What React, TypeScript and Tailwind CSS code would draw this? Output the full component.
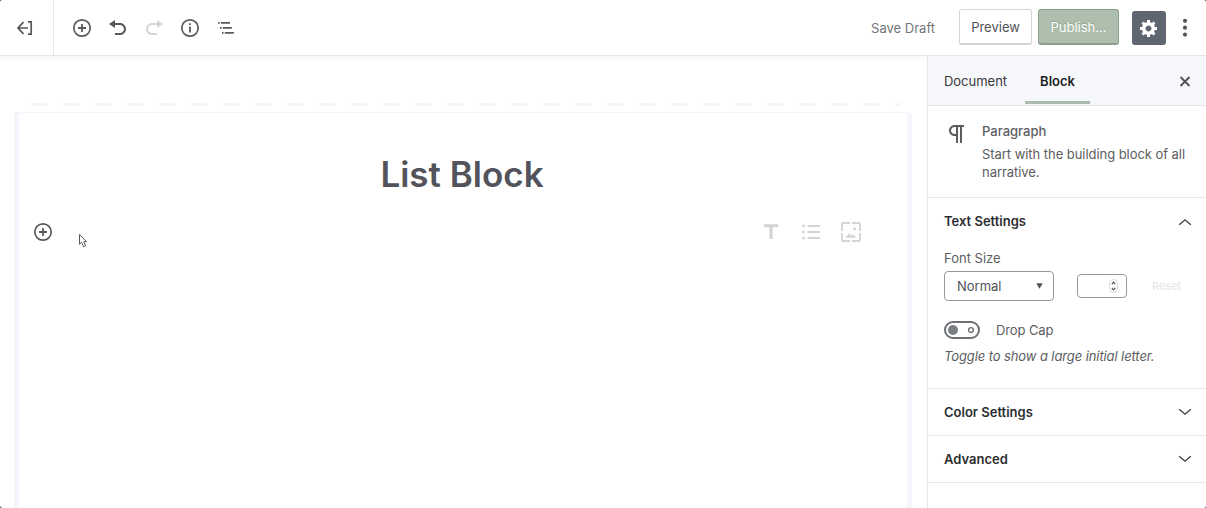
import type { ReactNode } from "react";

function Icon({ children, className = "" }: { children: ReactNode; className?: string }) {
  return (
    <svg viewBox="0 0 20 20" className={`size-5 shrink-0 fill-current ${className}`}>
      {children}
    </svg>
  );
}

function InsertIcon() {
  return (
    <Icon className="text-[#58595d]">
      <circle cx="10" cy="10" r="8.2" fill="none" stroke="currentColor" strokeWidth="1.7" />
      <path d="M9.1 6h1.8v3.1H14v1.8h-3.1V14H9.1v-3.1H6V9.1h3.1z" />
    </Icon>
  );
}

function Chevron({ up = false }: { up?: boolean }) {
  return (
    <svg viewBox="0 0 14 8" className={`h-2 w-3.5 ${up ? "rotate-180" : ""}`} fill="none" stroke="#3c3d40" strokeWidth="1.3">
      <path d="M1.2 1.2 7 6.2l5.8-5" />
    </svg>
  );
}

function PanelHeader({ title, open = false, className = "" }: { title: string; open?: boolean; className?: string }) {
  return (
    <button className={`flex w-full shrink-0 items-center justify-between pr-3.5 pl-4 ${className}`}>
      <span className="pt-px text-[13px] font-semibold text-[#2c2d30]">{title}</span>
      <Chevron up={open} />
    </button>
  );
}

function Header() {
  return (
    <header className="flex h-14 shrink-0 items-center border-b border-[#e4e6e8] bg-white">
      <div className="flex h-full w-[54px] items-center border-r border-[#e4e6e8] pl-[15px]">
        <Icon className="text-[#55565a]">
          <g fill="none" stroke="currentColor" strokeWidth="1.7">
            <path d="M13 10H3.2M8.5 4.2 3 10l5.5 5.8M13 3.9h3.2v12.2H13" />
          </g>
        </Icon>
      </div>
      <div className="flex items-center gap-4 pl-[18px] text-[#58595d]">
        <InsertIcon />
        <Icon>
          <path d="M12 5H7V2L1 6l6 4V7h5c2.2 0 4 1.8 4 4s-1.8 4-4 4H7v2h5c3.3 0 6-2.7 6-6s-2.7-6-6-6z" />
        </Icon>
        <Icon className="text-[#d5d6d7]">
          <path d="M8 5h5V2l6 4-6 4V7H8c-2.2 0-4 1.8-4 4s1.8 4 4 4h5v2H8c-3.3 0-6-2.7-6-6s2.7-6 6-6z" />
        </Icon>
        <Icon>
          <circle cx="10" cy="10" r="8.2" fill="none" stroke="currentColor" strokeWidth="1.7" />
          <path d="M9.1 5.2h1.8V7H9.1zM9.1 8.6h1.8v6H9.1z" />
        </Icon>
        <Icon>
          <path d="M2.2 4h1.6v1.7H2.2zM5 4h9v1.7H5zM4 9h1.7v1.7H4zM6.8 9h9v1.7h-9zM6 14h1.6v1.7H6zM8.8 14h9v1.7h-9z" />
        </Icon>
      </div>
      <div className="ml-auto flex items-center">
        <button className="mr-6 pt-0.5 text-[13px] text-[#74767a]">Save Draft</button>
        <button className="mr-1.5 mb-0.5 h-9 w-[73px] rounded-[3px] border border-b-2 border-[#d2d4d5] bg-white pt-[3px] text-[13px] text-[#515256]">
          Preview
        </button>
        <button className="mr-[13px] mb-0.5 h-9 w-[81px] rounded-[3px] border border-b-2 border-[#8da08d] bg-[#afbfae] pt-[3px] text-[13px] text-white [text-shadow:0_-1px_1px_#8b9e8b]">
          Publish...
        </button>
        <button className="flex size-[34px] items-center justify-center rounded-[3px] bg-[#5f6571] text-white">
          <Icon>
            <path
              fillRule="evenodd"
              d="M18 12h-2.18c-.17.7-.44 1.35-.81 1.93l1.54 1.54-2.1 2.1-1.54-1.54c-.58.36-1.23.63-1.91.79V19H8v-2.18c-.68-.16-1.33-.43-1.91-.79l-1.54 1.54-2.12-2.12 1.54-1.54c-.36-.58-.63-1.23-.79-1.91H1V9.03h2.17c.16-.7.44-1.35.8-1.94L2.43 5.55l2.1-2.1 1.54 1.54c.58-.37 1.24-.64 1.93-.81V2h3v2.18c.68.16 1.33.43 1.91.79l1.54-1.54 2.12 2.12-1.54 1.54c.36.59.64 1.24.8 1.94H18V12zm-8.5 1.5c1.66 0 3-1.34 3-3s-1.34-3-3-3-3 1.34-3 3 1.34 3 3 3z"
            />
          </Icon>
        </button>
        <Icon className="mr-[11px] ml-[9px] text-[#55565a]">
          <circle cx="10" cy="2.8" r="2.1" />
          <circle cx="10" cy="9.7" r="2.1" />
          <circle cx="10" cy="16.6" r="2.1" />
        </Icon>
      </div>
    </header>
  );
}

function Editor() {
  return (
    <main className="flex w-[927px] flex-col border-t-4 border-[#fafafd] pt-[43px] pr-[15px] pl-4">
      <svg className="h-[9px] w-full shrink-0" viewBox="0 0 896 9">
        <path d="M15.5 1.5H884" stroke="#f5f6fb" strokeWidth="3" strokeDasharray="16 16" />
      </svg>
      <div className="-ml-0.5 w-[898px] flex-1 rounded-t-[3px] border-t border-r-[5px] border-l-[5px] border-[#f5f6fb] bg-white">
        <h1 className="mt-[39px] pr-0.5 text-center text-[35px] leading-[44px] font-semibold text-[#53535b]">
          List Block
        </h1>
        <div className="mt-6 flex h-6 items-center pl-3.5">
          <InsertIcon />
          <svg viewBox="0 0 10 16" className="mt-[18px] ml-[25px] h-4 w-2.5">
            <path d="M1.5 1.5v9.8l2.1-1.9 2 4.3 2-.9-1.9-4.1h2.8z" fill="#fff" stroke="#45464a" strokeWidth=".9" />
          </svg>
          <div className="mr-[46px] ml-auto flex items-center gap-5 text-[#d3d4d5]">
            <Icon>
              <path d="M3 2.3h14v3h-5.4V17H8.4V5.3H3z" />
            </Icon>
            <Icon>
              <circle cx="2.5" cy="4" r="1.5" />
              <circle cx="2.5" cy="10" r="1.5" />
              <circle cx="2.5" cy="16" r="1.5" />
              <path d="M6.5 3.1H19v1.8H6.5zM6.5 9.1H19v1.8H6.5zM6.5 15.1H19v1.8H6.5z" />
            </Icon>
            <Icon>
              <path
                d="M1 9V2q0-1 1-1h7M11 1h7q1 0 1 1v7M19 11v7q0 1-1 1h-7M9 19H2q-1 0-1-1v-7"
                fill="none"
                stroke="currentColor"
                strokeWidth="1.8"
              />
              <path d="m4.3 15.8 3.8-4.5 2.3 2.6 1.6-1.7 3.5 3.6z" />
              <circle cx="13.5" cy="6.7" r="1.5" />
            </Icon>
          </div>
        </div>
      </div>
    </main>
  );
}

function Sidebar() {
  return (
    <aside className="flex w-[279px] shrink-0 flex-col border-l border-[#e4e6e8] bg-white text-[13px] text-[#5c5d61]">
      <div className="flex h-[50px] shrink-0 border-b border-[#e4e6e8] bg-[#f6f7fb] text-[#36373b]">
        <button className="w-[97px] pt-0.5 text-[13px]">
          <span className="block -ml-0.5">Document</span>
        </button>
        <button className="mb-px w-[65px] border-b-[3px] border-[#aabca9] pt-1.5 font-semibold text-[#1e1f22]">
          Block
        </button>
        <svg viewBox="0 0 12 12" className="mt-px mr-[15px] ml-auto h-full w-3" stroke="#505156" strokeWidth="1.9">
          <path d="m1.5 1.5 9 9m0-9-9 9" />
        </svg>
      </div>
      <section className="flex h-[92px] shrink-0 border-b border-[#e6e7e9] pt-4 pl-[17px]">
        <svg viewBox="0 0 24 24" className="size-6 shrink-0 fill-[#5b5c60]">
          <path d="M11 5v7H9.5C7.6 12 6 10.4 6 8.5S7.6 5 9.5 5H11m8-2H9.5C6.5 3 4 5.5 4 8.5S6.5 14 9.5 14H11v7h2V5h2v16h2V5h2V3z" />
        </svg>
        <div className="ml-[13px]">
          <h2 className="leading-[19px] font-medium">Paragraph</h2>
          <p className="mt-1 leading-[18px] tracking-[-0.05px] whitespace-nowrap">
            Start with the building block of all
            <br />
            narrative.
          </p>
        </div>
      </section>
      <section className="h-[191px] shrink-0 border-b border-[#e6e7e9]">
        <PanelHeader title="Text Settings" open className="h-[47px]" />
        <div className="pt-1 pl-4">
          <div className="leading-[18px]">Font Size</div>
          <div className="mt-1 flex items-center">
            <div className="flex h-[30px] w-[110px] items-center justify-between rounded-[4px] border border-[#96999d] pr-2.5 pl-3 text-[#505156]">
              <span className="pt-0.5">Normal</span>
              <svg viewBox="0 0 7 6" className="h-1.5 w-[7px] fill-[#505156]">
                <path d="M.3.3h6.4L3.5 5.7z" />
              </svg>
            </div>
            <div className="ml-[23px] flex h-6 w-[50px] items-center justify-end rounded-[4px] border border-[#96999d] pr-2">
              <svg viewBox="0 0 9 14" className="h-3.5 w-[9px]" fill="none">
                <rect x=".5" y=".5" width="8" height="13" rx="4" stroke="#d8d9da" />
                <path d="m2.8 5 1.7-1.8L6.2 5M2.8 9l1.7 1.8L6.2 9" stroke="#55565a" strokeWidth="1.2" />
              </svg>
            </div>
            <button className="ml-[25px] text-[11px] text-[#e3e4e5]">Reset</button>
          </div>
          <div className="mt-5 flex h-[18px] items-center">
            <svg viewBox="0 0 36 18" className="h-[18px] w-9">
              <rect x="1" y="1" width="34" height="16" rx="8" fill="#fff" stroke="#6d7075" strokeWidth="2" />
              <circle cx="9" cy="9" r="5" fill="#7b7e83" />
              <circle cx="27" cy="9" r="2.4" fill="none" stroke="#6d7075" strokeWidth="1.4" />
            </svg>
            <span className="ml-4 pt-px tracking-[-0.1px]">Drop Cap</span>
          </div>
          <p className="mt-2 leading-[18px] tracking-[-0.1px] italic">Toggle to show a large initial letter.</p>
        </div>
      </section>
      <PanelHeader title="Color Settings" className="h-[47px] border-b border-[#e6e7e9]" />
      <PanelHeader title="Advanced" className="h-[47px] border-b border-[#e6e7e9]" />
    </aside>
  );
}

export default function App() {
  return (
    <div className="h-[508px] w-[1206px] bg-[#55565a] font-[Inter,sans-serif]">
      <div className="flex h-full flex-col overflow-hidden rounded-[3px] bg-white">
        <Header />
        <div className="flex min-h-0 flex-1">
          <Editor />
          <Sidebar />
        </div>
      </div>
    </div>
  );
}
